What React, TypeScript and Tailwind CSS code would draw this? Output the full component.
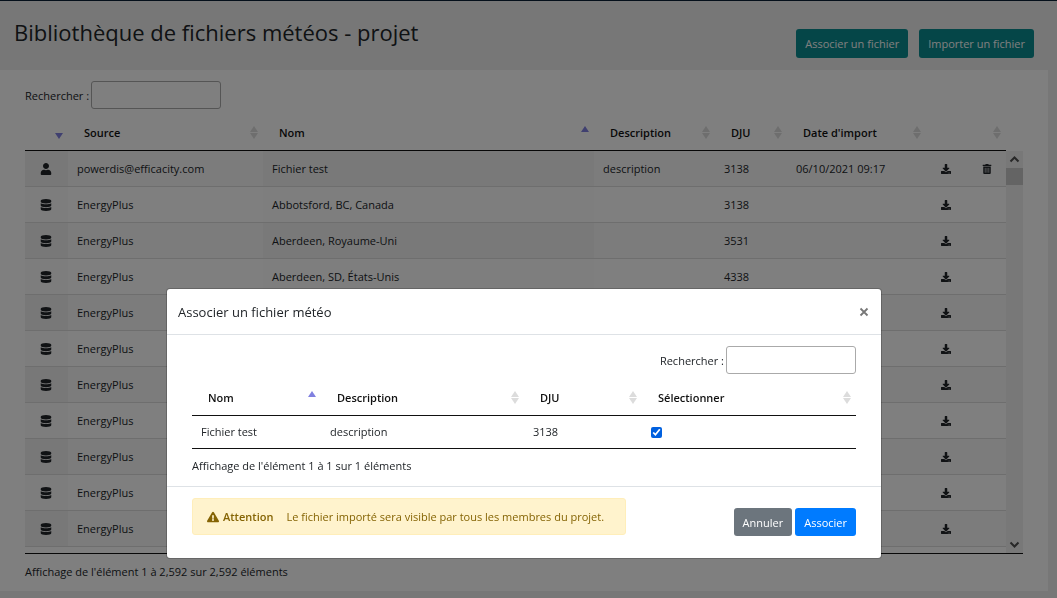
import React from "react";
import { FaDatabase, FaDownload, FaExclamationTriangle, FaTrashAlt, FaUser } from "react-icons/fa";

type Sort = "both" | "asc" | "desc" | "none";

type WeatherFile = {
  source: string;
  name: string;
  description?: string;
  dju: string;
  date?: string;
  own?: boolean;
};

const files: WeatherFile[] = [
  { source: "powerdis@efficacity.com", name: "Fichier test", description: "description", dju: "3138", date: "06/10/2021 09:17", own: true },
  { source: "EnergyPlus", name: "Abbotsford, BC, Canada", dju: "3138" },
  { source: "EnergyPlus", name: "Aberdeen, Royaume-Uni", dju: "3531" },
  { source: "EnergyPlus", name: "Aberdeen, SD, États-Unis", dju: "4338" },
  ...Array.from({ length: 7 }, () => ({ source: "EnergyPlus", name: "", dju: "" })),
];

function SortMark({ sort }: { sort: Sort }) {
  if (sort === "none") return null;
  const color = sort === "both" ? "#dcdcdc" : "#8080e0";
  return (
    <svg viewBox="0 0 8 14" className="h-[14px] w-2 shrink-0" aria-hidden="true">
      {sort !== "desc" && <path d="M4 0 8 6H0z" fill={color} />}
      {sort !== "asc" && <path d="M0 7h8l-4 6z" fill={color} />}
    </svg>
  );
}

function Head({ label, sort }: { label?: string; sort: Sort }) {
  return (
    <th className="h-9 border-b border-[#111] p-0 pr-[5px] pl-4 text-left font-semibold text-[#111]">
      <span className="flex items-center justify-between">
        <span>{label}</span>
        <SortMark sort={sort} />
      </span>
    </th>
  );
}

function Columns() {
  return (
    <colgroup>
      <col className="w-[43px]" />
      <col className="w-[195px]" />
      <col />
      <col className="w-[121px]" />
      <col className="w-[72px]" />
      <col className="w-[139px]" />
      <col className="w-10" />
      <col className="w-10" />
    </colgroup>
  );
}

function Search({ id }: { id: string }) {
  return (
    <div className="flex items-center gap-0.5">
      <label htmlFor={id} className="pt-0.5">Rechercher :</label>
      <input id={id} type="search" className="h-7 w-[130px] rounded-[3px] border border-[#aaa] bg-transparent px-1" />
    </div>
  );
}

function Library() {
  return (
    <main className="min-h-screen border-t border-[#0b2036] bg-[#efefef]">
      <header className="flex h-[69px] items-start justify-between pr-[23px] pl-[14px]">
        <h1 className="pt-[15px] text-[22px] leading-8 text-[#212529]">Bibliothèque de fichiers météos - projet</h1>
        <div className="flex gap-[11px] pt-7">
          <button className="h-[29px] rounded-[3px] bg-[#0a8c90] px-[9px] text-white">Associer un fichier</button>
          <button className="h-[29px] rounded-[3px] bg-[#0a8c90] px-[9px] text-white">Importer un fichier</button>
        </div>
      </header>
      <section className="mr-[9px] bg-white pt-[11px] pr-[25px] pb-[11px] pl-[25px]">
        <Search id="library-search" />
        <div className="pt-[6px] pr-[17px]">
          <table className="w-full table-fixed border-separate border-spacing-0">
            <Columns />
            <thead>
              <tr>
                <Head sort="desc" />
                <Head label="Source" sort="both" />
                <Head label="Nom" sort="asc" />
                <Head label="Description" sort="both" />
                <Head label="DJU" sort="both" />
                <Head label="Date d'import" sort="both" />
                <Head sort="none" />
                <Head sort="both" />
              </tr>
            </thead>
          </table>
        </div>
        <div className="flex h-[403px] overflow-hidden border-b border-[#111]">
          <div className="min-w-0 flex-1">
            <table className="w-full table-fixed border-separate border-spacing-0">
              <Columns />
              <tbody className="[&_td]:h-9 [&_td]:border-b [&_td]:border-[#ddd] [&_td]:p-0 [&_td]:px-[9px]">
                {files.map((file, i) => (
                  <tr key={i} className={i % 2 ? "bg-white" : "bg-[#f9f9f9]"}>
                    <td className={i % 2 ? "bg-[#fafafa]" : "bg-[#f1f1f1]"}>
                      {file.own ? <FaUser className="ml-[6px] size-3" /> : <FaDatabase className="ml-[6px] size-3" />}
                    </td>
                    <td>{file.source}</td>
                    <td className={i % 2 ? "bg-[#fcfcfc]" : "bg-[#f3f3f3]"}>{file.name}</td>
                    <td>{file.description}</td>
                    <td>{file.dju}</td>
                    <td>{file.date}</td>
                    <td>
                      <FaDownload className="mx-auto size-[10px]" />
                    </td>
                    <td>{file.own && <FaTrashAlt className="ml-[7px] size-[10px]" />}</td>
                  </tr>
                ))}
              </tbody>
            </table>
          </div>
          <div className="flex w-[17px] flex-col items-center bg-[#f1f1f1] text-[#505050]" aria-hidden="true">
            <svg viewBox="0 0 17 17" className="size-[17px]">
              <path d="M4.5 10.5 8.5 6.5l4 4" fill="none" stroke="currentColor" strokeWidth="2" />
            </svg>
            <div className="h-[17px] w-full bg-[#c9c9c9]" />
            <svg viewBox="0 0 17 17" className="mt-auto size-[17px]">
              <path d="m4.5 6.5 4 4 4-4" fill="none" stroke="currentColor" strokeWidth="2" />
            </svg>
          </div>
        </div>
        <p className="pt-[10px] leading-4">Affichage de l'élément 1 à 2,592 sur 2,592 éléments</p>
      </section>
    </main>
  );
}

function LinkDialog() {
  return (
    <div className="fixed inset-0 flex items-start justify-center bg-black/50 pt-[289px] pr-[9px]">
      <div role="dialog" aria-labelledby="dialog-title" className="w-[714px] rounded-[3px] bg-white shadow-[0_0_0_1px_rgba(0,0,0,0.2)]">
        <header className="flex h-[46px] items-center justify-between border-b border-[#dee2e6] px-[11px]">
          <h2 id="dialog-title" className="text-[13px]">Associer un fichier météo</h2>
          <button aria-label="Fermer" className="flex size-3 items-center justify-center text-[#777]">
            <svg viewBox="0 0 10 10" className="size-[10px]" aria-hidden="true">
              <path d="m1.500 1.500 7 7m0-7-7 7" fill="none" stroke="currentColor" strokeWidth="1.800" />
            </svg>
          </button>
        </header>
        <div className="px-[25px] pt-[11px]">
          <div className="flex justify-end">
            <Search id="dialog-search" />
          </div>
          <table className="mt-[6px] w-full table-fixed border-separate border-spacing-0">
            <colgroup>
              <col className="w-[129px]" />
              <col className="w-[203px]" />
              <col className="w-[118px]" />
              <col />
            </colgroup>
            <thead>
              <tr>
                <Head label="Nom" sort="asc" />
                <Head label="Description" sort="both" />
                <Head label="DJU" sort="both" />
                <Head label="Sélectionner" sort="both" />
              </tr>
            </thead>
            <tbody>
              <tr className="[&_td]:h-[33px] [&_td]:border-b [&_td]:border-[#111] [&_td]:p-0 [&_td]:px-[9px]">
                <td>Fichier test</td>
                <td>description</td>
                <td>3138</td>
                <td>
                  <input type="checkbox" defaultChecked aria-label="Sélectionner Fichier test" className="block size-[11px] accent-[#0060df]" />
                </td>
              </tr>
            </tbody>
          </table>
          <p className="pt-[9px] pb-3 leading-4">Affichage de l'élément 1 à 1 sur 1 éléments</p>
        </div>
        <footer className="flex items-start justify-between border-t border-[#dee2e6] px-[25px] pt-[11px] pb-[22px]">
          <p className="flex h-[37px] w-[434px] items-center rounded-[3px] border border-[#ffeeba] bg-[#fff3cd] px-[14px] text-[#856404]">
            <FaExclamationTriangle className="mr-1 size-3" />
            <strong className="mr-[13px] font-semibold">Attention</strong>
            Le fichier importé sera visible par tous les membres du projet.
          </p>
          <div className="flex gap-[3px] pt-[10px]">
            <button className="h-7 rounded-[3px] bg-[#6c757d] px-[9px] pt-0.5 text-white">Annuler</button>
            <button className="h-7 rounded-[3px] bg-[#007bff] px-[9px] pt-0.5 text-white">Associer</button>
          </div>
        </footer>
      </div>
    </div>
  );
}

export default function App() {
  return (
    <div className="font-['Open_Sans','Noto_Sans',sans-serif] text-[11px] leading-4 text-[#212529]">
      <Library />
      <LinkDialog />
    </div>
  );
}
